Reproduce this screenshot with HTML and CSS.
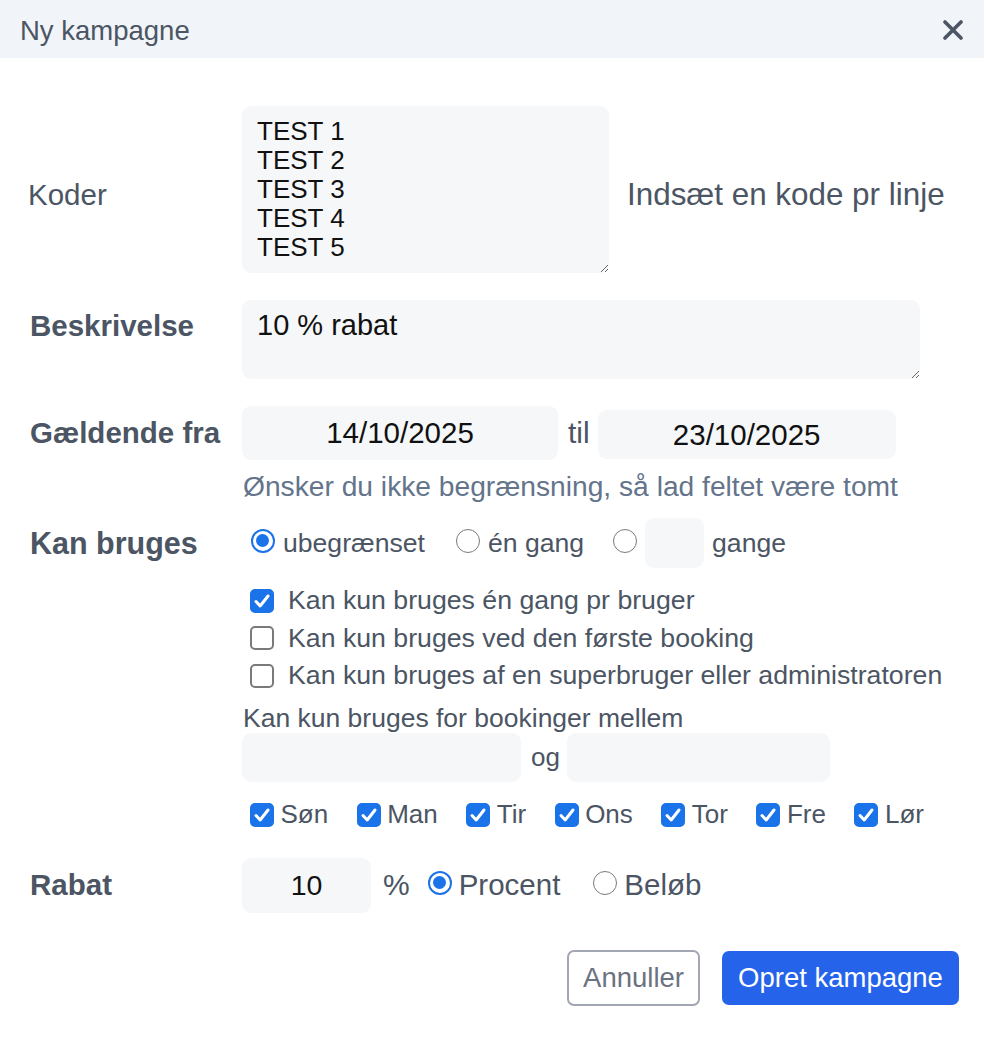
FILE: index.html
```html
<!DOCTYPE html>
<html lang="da">
<head>
<meta charset="utf-8">
<title>Ny kampagne</title>
<link rel="stylesheet" href="styles.css">
</head>
<body>
<div class="modal">
  <div class="header">
    <div class="title">Ny kampagne</div>
    <svg class="close" width="20" height="20" viewBox="0 0 20 20"><path d="M2 2 L18 18 M18 2 L2 18" stroke="#4b5563" stroke-width="3.6" stroke-linecap="round"/></svg>
  </div>
  <div class="body">
    <div class="row row-koder">
      <div class="label label-normal label-koder">Koder</div>
      <textarea class="ta ta-koder">TEST 1
TEST 2
TEST 3
TEST 4
TEST 5</textarea>
      <div class="side-note">Indsæt en kode pr linje</div>
    </div>

    <div class="row row-top row-besk">
      <div class="label label-besk">Beskrivelse</div>
      <textarea class="ta ta-besk">10 % rabat</textarea>
    </div>

    <div class="row row-top row-dates">
      <div class="label label-dates">Gældende fra</div>
      <div class="col">
        <div class="dates">
          <input class="inp inp-from" type="text" value="14/10/2025">
          <span class="til">til</span>
          <input class="inp inp-to" type="text" value="23/10/2025">
        </div>
        <div class="hint">Ønsker du ikke begrænsning, så lad feltet være tomt</div>
      </div>
    </div>

    <div class="row row-top row-usage">
      <div class="label label-usage">Kan bruges</div>
      <div class="col">
        <div class="radios">
          <span class="radio checked"></span><span class="rlabel">ubegrænset</span>
          <span class="radio r2"></span><span class="rlabel">én gang</span>
          <span class="radio r3"></span><input class="inp inp-times" type="text" value=""><span class="rlabel gange">gange</span>
        </div>
        <div class="checks">
          <div class="check-row"><span class="cb checked"><svg viewBox="0 0 24 24" width="24" height="24"><path d="M6 12.5 L10.2 17 L18 7" fill="none" stroke="#fff" stroke-width="3" stroke-linecap="round" stroke-linejoin="round"/></svg></span><span class="clabel">Kan kun bruges én gang pr bruger</span></div>
          <div class="check-row"><span class="cb"></span><span class="clabel">Kan kun bruges ved den første booking</span></div>
          <div class="check-row"><span class="cb"></span><span class="clabel">Kan kun bruges af en superbruger eller administratoren</span></div>
        </div>
        <div class="between-label">Kan kun bruges for bookinger mellem</div>
        <div class="between">
          <input class="inp inp-b1" type="text" value="">
          <span class="og">og</span>
          <input class="inp inp-b2" type="text" value="">
        </div>
        <div class="days">
          <div class="day"><span class="cb checked"><svg viewBox="0 0 24 24" width="24" height="24"><path d="M6 12.5 L10.2 17 L18 7" fill="none" stroke="#fff" stroke-width="3" stroke-linecap="round" stroke-linejoin="round"/></svg></span><span class="dlabel">Søn</span></div>
          <div class="day"><span class="cb checked"><svg viewBox="0 0 24 24" width="24" height="24"><path d="M6 12.5 L10.2 17 L18 7" fill="none" stroke="#fff" stroke-width="3" stroke-linecap="round" stroke-linejoin="round"/></svg></span><span class="dlabel">Man</span></div>
          <div class="day"><span class="cb checked"><svg viewBox="0 0 24 24" width="24" height="24"><path d="M6 12.5 L10.2 17 L18 7" fill="none" stroke="#fff" stroke-width="3" stroke-linecap="round" stroke-linejoin="round"/></svg></span><span class="dlabel">Tir</span></div>
          <div class="day"><span class="cb checked"><svg viewBox="0 0 24 24" width="24" height="24"><path d="M6 12.5 L10.2 17 L18 7" fill="none" stroke="#fff" stroke-width="3" stroke-linecap="round" stroke-linejoin="round"/></svg></span><span class="dlabel">Ons</span></div>
          <div class="day"><span class="cb checked"><svg viewBox="0 0 24 24" width="24" height="24"><path d="M6 12.5 L10.2 17 L18 7" fill="none" stroke="#fff" stroke-width="3" stroke-linecap="round" stroke-linejoin="round"/></svg></span><span class="dlabel">Tor</span></div>
          <div class="day"><span class="cb checked"><svg viewBox="0 0 24 24" width="24" height="24"><path d="M6 12.5 L10.2 17 L18 7" fill="none" stroke="#fff" stroke-width="3" stroke-linecap="round" stroke-linejoin="round"/></svg></span><span class="dlabel">Fre</span></div>
          <div class="day"><span class="cb checked"><svg viewBox="0 0 24 24" width="24" height="24"><path d="M6 12.5 L10.2 17 L18 7" fill="none" stroke="#fff" stroke-width="3" stroke-linecap="round" stroke-linejoin="round"/></svg></span><span class="dlabel">Lør</span></div>
        </div>
      </div>
    </div>

    <div class="row row-rabat">
      <div class="label">Rabat</div>
      <input class="inp inp-rabat" type="text" value="10">
      <span class="pct">%</span>
      <span class="radio checked rr1"></span><span class="plabel">Procent</span>
      <span class="radio rr2"></span><span class="plabel">Beløb</span>
    </div>

    <div class="actions">
      <button class="btn btn-cancel">Annuller</button>
      <button class="btn btn-primary">Opret kampagne</button>
    </div>
  </div>
</div>
</body>
</html>
```

FILE: styles.css
```css
* { box-sizing: border-box; }
html, body { margin: 0; padding: 0; background: #ffffff; }
body {
  font-family: "Liberation Sans", Arial, sans-serif;
  color: #4b5563;
}
.modal { width: 984px; }

.header {
  height: 58px;
  background: #f1f4f8;
  display: flex;
  align-items: center;
  justify-content: space-between;
  padding: 0 21px 0 20px;
}
.title { font-size: 27.5px; color: #4b5563; margin-top: 4px; }
.close { display: block; margin-top: 2px; }

.body { padding: 48px 25px 0 30px; }

.row { display: flex; align-items: center; }
.row-top { align-items: flex-start; }

.label {
  width: 212px;
  flex: none;
  font-size: 29.5px;
  font-weight: bold;
  color: #4b5563;
}
.label-normal { font-weight: normal; }
.label-koder { margin-left: -2px; margin-right: 2px; padding-top: 11px; }

.ta {
  border: none;
  outline: none;
  background: #f6f7f9;
  border-radius: 9px;
  font-family: "Liberation Sans", Arial, sans-serif;
  color: #111;
  resize: both;
  display: block;
  margin: 0;
}
.ta-koder {
  width: 367px;
  height: 167px;
  font-size: 26px;
  line-height: 29px;
  padding: 11px 15px 0 15px;
  overflow: hidden;
}
.side-note { font-size: 31.4px; color: #4b5563; margin-left: 18px; padding-top: 11px; }

.row-besk { margin-top: 27px; }
.label-besk { line-height: 33px; padding-top: 9px; }
.ta-besk {
  width: 678px;
  height: 79px;
  font-size: 29px;
  line-height: 33px;
  padding: 9px 15px 0 15px;
  overflow: hidden;
}

.row-dates { margin-top: 27px; }
.label-dates { line-height: 54px; }
.col { display: flex; flex-direction: column; }

.inp {
  border: none;
  outline: none;
  background: #f6f7f9;
  border-radius: 9px;
  font-family: "Liberation Sans", Arial, sans-serif;
  color: #111;
  margin: 0;
  padding: 0;
  text-align: center;
  display: block;
}
.dates { display: flex; align-items: center; height: 54px; }
.inp-from { width: 316px; height: 54px; font-size: 29.5px; }
.inp-to { width: 298px; height: 49px; font-size: 29.5px; margin-top: 3px; }
.til { font-size: 30px; color: #4b5563; margin: 0 8px 0 10px; }
.hint { font-size: 28.2px; line-height: 30px; color: #64748b; margin-top: 11px; margin-left: 1px; }

.row-usage { margin-top: 17px; }
.label-usage { line-height: 50px; font-size: 30.5px; }
.radios { display: flex; align-items: center; height: 50px; padding-left: 9px; }
.radio {
  width: 24px;
  height: 24px;
  border-radius: 50%;
  border: 1.5px solid #7a7a7a;
  background: #fff;
  flex: none;
  position: relative;
  margin-top: -5px;
}
.radio.checked { border: 2.5px solid #1a73e8; }
.radio.checked::after {
  content: "";
  position: absolute;
  left: 3px; top: 3px;
  width: 13px; height: 13px;
  border-radius: 50%;
  background: #1a73e8;
}
.rlabel { font-size: 26.6px; color: #4b5563; margin-left: 8px; }
.r2 { margin-left: 31px; }
.r3 { margin-left: 29px; }
.inp-times { width: 59px; height: 50px; margin-left: 8px; font-size: 26px; }
.gange { margin-left: 8px; }

.checks { margin-top: 14px; padding-left: 8px; }
.check-row { display: flex; align-items: center; height: 37.5px; }
.cb {
  width: 24px;
  height: 24px;
  border-radius: 5px;
  border: 2px solid #7a7a7a;
  background: #fff;
  flex: none;
  display: block;
}
.cb svg { display: block; margin: -2px; }
.cb.checked { background: #1a73e8; border-color: #1a73e8; }
.clabel { font-size: 26.7px; color: #4b5563; margin-left: 14px; }

.between-label { font-size: 26.5px; line-height: 30px; color: #4b5563; margin-top: 8px; margin-left: 1px; }
.between { display: flex; align-items: center; }
.inp-b1 { width: 279px; height: 49px; }
.inp-b2 { width: 263px; height: 49px; }
.og { font-size: 26px; color: #4b5563; margin: 0 7px 0 10px; }

.days { display: flex; align-items: center; height: 36px; margin-top: 15px; padding-left: 8px; gap: 28.5px; }
.day { display: flex; align-items: center; }
.dlabel { font-size: 26px; color: #4b5563; margin-left: 6.5px; }

.row-rabat { margin-top: 25px; }
.inp-rabat { width: 129px; height: 55px; font-size: 28.5px; }
.pct { font-size: 30px; color: #4b5563; margin-left: 12px; }
.rr1 { margin-left: 18px; margin-top: -4px; }
.rr2 { margin-left: 33px; margin-top: -4px; }
.plabel { font-size: 29.5px; color: #4b5563; margin-left: 7px; }

.actions { display: flex; justify-content: flex-end; gap: 22px; margin-top: 37px; }
.btn {
  font-family: "Liberation Sans", Arial, sans-serif;
  font-size: 27.5px;
  margin: 0;
  cursor: pointer;
}
.btn-cancel {
  width: 133px;
  height: 56px;
  background: #fff;
  border: 2px solid #a3a7b3;
  border-radius: 7px;
  color: #6b7280;
}
.btn-primary {
  width: 237px;
  height: 54px;
  margin-top: 1px;
  background: #2563eb;
  border: none;
  border-radius: 7px;
  color: #fff;
}
```
